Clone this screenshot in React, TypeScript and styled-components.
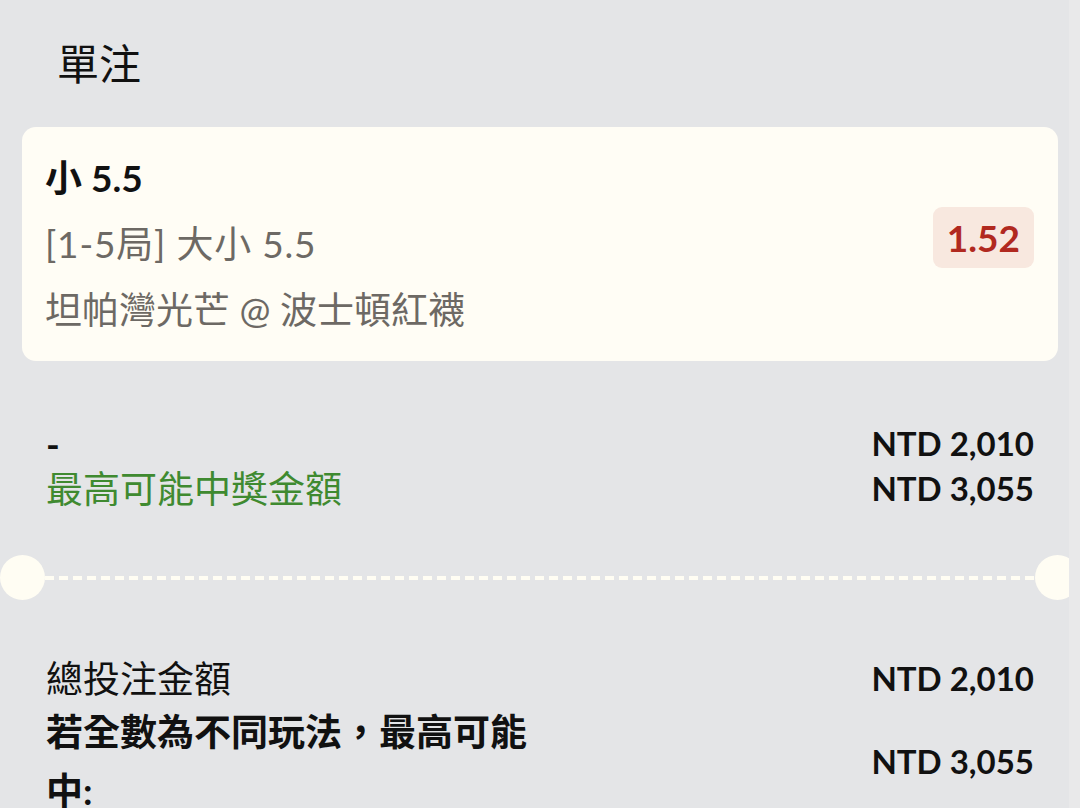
import styled, { createGlobalStyle } from "styled-components";

const GlobalStyle = createGlobalStyle`
  html, body {
    margin: 0;
    padding: 0;
    background-color: #e4e5e7;
  }
  body {
    font-family: Lato, "Noto Sans CJK TC", sans-serif;
    color: #111111;
  }
`;

const PageWrapper = styled.div`
  width: 1080px;
  min-height: 808px;
  box-sizing: border-box;
  padding: 0 22px;
  overflow: hidden;
`;

const ScrollTrack = styled.div`
  position: fixed;
  top: 0;
  right: 0;
  z-index: 2;
  width: 11px;
  height: 100%;
  background-color: #e9e9ea;
`;

const Title = styled.h1`
  margin: 0;
  padding: 22px 0 0 35px;
  font-size: 42px;
  font-weight: 400;
  line-height: 84px;
`;

const Card = styled.div`
  margin-top: 21px;
  background-color: #fffdf5;
  border-radius: 14px;
  padding: 18px 24px 18px 23px;
  display: flex;
  justify-content: space-between;
  align-items: center;
`;

const CardInfo = styled.div`
  display: flex;
  flex-direction: column;
`;

const InfoLine = styled.div<{ $strong?: boolean; $spaced?: boolean }>`
  font-size: 37px;
  line-height: 66px;
  font-weight: ${(props) => (props.$strong ? 700 : 400)};
  color: ${(props) => (props.$strong ? "#111111" : "#6d6964")};
  letter-spacing: ${(props) => (props.$spaced ? "0.8px" : "0")};
  white-space: nowrap;
`;

const OddsBadge = styled.div`
  background-color: #f8e8df;
  color: #b1291f;
  border-radius: 9px;
  padding: 0 14px;
  font-size: 37px;
  font-weight: 700;
  line-height: 61px;
  margin-bottom: 14px;
`;

const Section = styled.div<{ $top: number }>`
  margin-top: ${(props) => props.$top}px;
  padding: 0 24px 0 24px;
  display: flex;
  flex-direction: column;
`;

const Row = styled.div<{ $gap?: number }>`
  display: flex;
  justify-content: space-between;
  align-items: center;
  margin-top: ${(props) => props.$gap ?? 0}px;
`;

const Label = styled.div<{ $tone?: "green" | "bold" }>`
  font-size: 37px;
  line-height: ${(props) => (props.$tone === "bold" ? "59px" : "45px")};
  font-weight: ${(props) => (props.$tone === "bold" ? 700 : 400)};
  color: ${(props) => (props.$tone === "green" ? "#3f8a30" : "#111111")};
  max-width: 500px;
`;

const Dash = styled.div`
  font-size: 37px;
  line-height: 45px;
  font-weight: 700;
`;

const Amount = styled.div`
  font-size: 33px;
  line-height: 45px;
  font-weight: 700;
  white-space: nowrap;
`;

const Divider = styled.div`
  margin: 44px -22px 0;
  height: 45px;
  display: flex;
  align-items: center;
`;

const Notch = styled.span`
  width: 45px;
  height: 45px;
  flex: none;
  border-radius: 50%;
  background-color: #fffdf3;
`;

const DashedLine = styled.span`
  flex: 1;
  height: 4px;
  background: repeating-linear-gradient(
    to right,
    #fffdf3 0 9px,
    transparent 9px 14px
  );
`;

function App() {
  return (
    <PageWrapper>
      <GlobalStyle />
      <Title>單注</Title>
      <Card>
        <CardInfo>
          <InfoLine $strong>小 5.5</InfoLine>
          <InfoLine $spaced>[1-5局] 大小 5.5</InfoLine>
          <InfoLine>坦帕灣光芒 @ 波士頓紅襪</InfoLine>
        </CardInfo>
        <OddsBadge>1.52</OddsBadge>
      </Card>

      <Section $top={60}>
        <Row>
          <Dash>-</Dash>
          <Amount>NTD 2,010</Amount>
        </Row>
        <Row>
          <Label $tone="green">最高可能中獎金額</Label>
          <Amount>NTD 3,055</Amount>
        </Row>
      </Section>

      <Divider>
        <Notch />
        <DashedLine />
        <Notch />
      </Divider>

      <Section $top={56}>
        <Row>
          <Label>總投注金額</Label>
          <Amount>NTD 2,010</Amount>
        </Row>
        <Row $gap={1}>
          <Label $tone="bold">若全數為不同玩法，最高可能中:</Label>
          <Amount>NTD 3,055</Amount>
        </Row>
      </Section>
      <ScrollTrack />
    </PageWrapper>
  );
}

export default App;
